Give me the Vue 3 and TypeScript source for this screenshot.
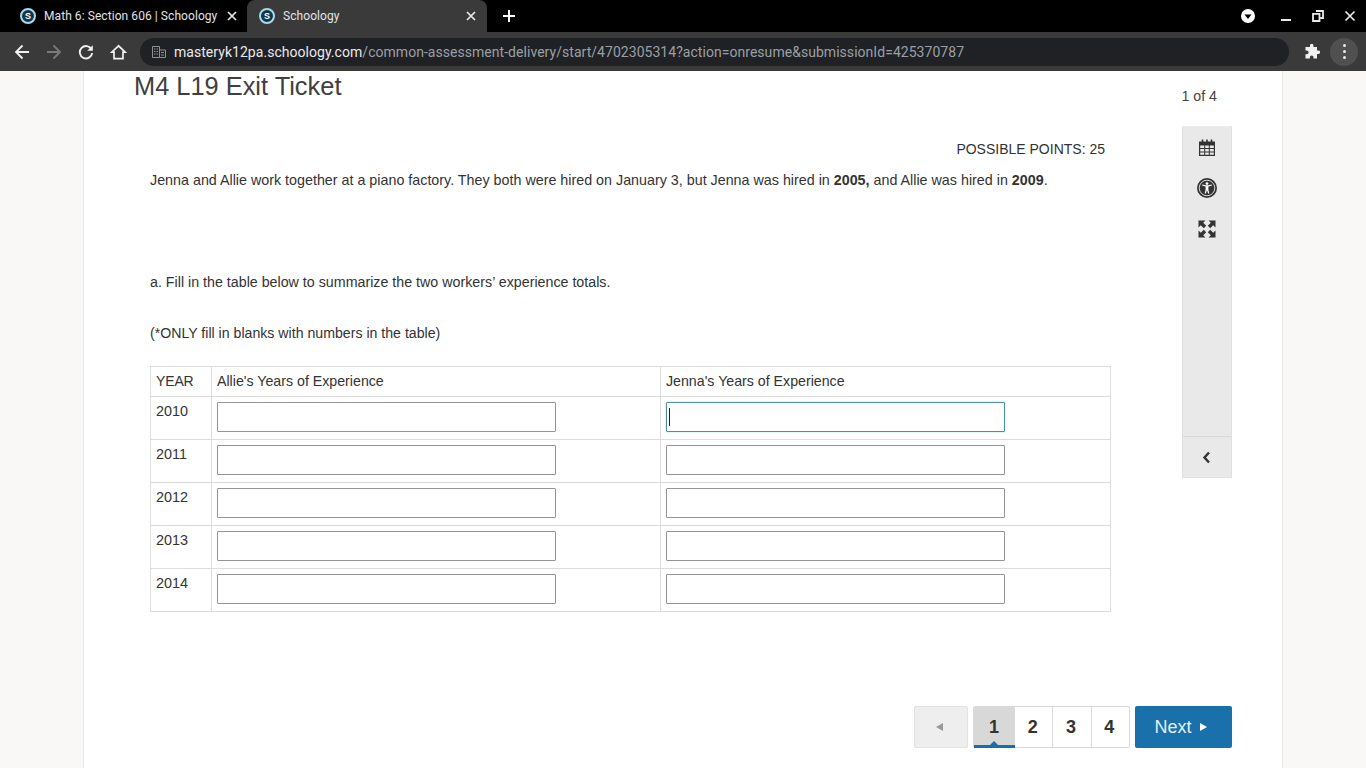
<script setup lang="ts">
const rows: number[] = [2010, 2011, 2012, 2013, 2014]
const pages: number[] = [1, 2, 3, 4]
</script>

<template>
  <div class="screen">
    <header class="chrome">
      <div class="tabstrip">
        <div class="tab">
          <span class="favicon"><span>S</span></span>
          <span class="tab-title">Math 6: Section 606 | Schoology</span>
          <svg class="tab-x" width="10" height="10" viewBox="0 0 10 10"><path d="M1 1l8 8M9 1l-8 8" stroke="#e8eaed" stroke-width="1.7" fill="none"/></svg>
        </div>
        <div class="tab active">
          <span class="favicon"><span>S</span></span>
          <span class="tab-title">Schoology</span>
          <svg class="tab-x" width="10" height="10" viewBox="0 0 10 10"><path d="M1 1l8 8M9 1l-8 8" stroke="#e8eaed" stroke-width="1.7" fill="none"/></svg>
        </div>
        <svg class="newtab" width="14" height="14" viewBox="0 0 14 14"><path d="M7 1v12M1 7h12" stroke="#fff" stroke-width="2" fill="none"/></svg>
        <div class="win">
          <svg width="16" height="16" viewBox="0 0 16 16"><circle cx="8" cy="8" r="7" fill="#fff"/><path d="M4.500 6.500h7L8 11z" fill="#000"/></svg>
          <svg class="w-min" width="12" height="12" viewBox="0 0 12 12"><path d="M1 10h10" stroke="#e8eaed" stroke-width="2"/></svg>
          <svg class="w-max" width="12" height="12" viewBox="0 0 12 12"><path d="M4 1h7v7H8.500M1 3.800h6.500v7.200H1z" stroke="#e8eaed" stroke-width="1.800" fill="none"/></svg>
          <svg class="w-close" width="12" height="12" viewBox="0 0 12 12"><path d="M1.500 1.500l9 9M10.500 1.500l-9 9" stroke="#e8eaed" stroke-width="1.700" fill="none"/></svg>
        </div>
      </div>
      <div class="toolbar">
        <svg class="nav" width="16" height="16" viewBox="0 0 16 16"><path d="M15 8H2.500M8.500 1.500L2 8l6.500 6.500" stroke="#f1f1f1" stroke-width="1.800" fill="none"/></svg>
        <svg class="nav" width="16" height="16" viewBox="0 0 16 16"><path d="M1 8h12.500M7.500 1.500L14 8l-6.500 6.500" stroke="#7a7a7a" stroke-width="1.800" fill="none"/></svg>
        <svg class="nav" width="16" height="16" viewBox="0 0 16 16"><path d="M13.600 5.500A6.200 6.200 0 1 0 14.200 9" stroke="#f1f1f1" stroke-width="1.900" fill="none"/><path d="M14.800 1.200v5.600H9.200z" fill="#f1f1f1"/></svg>
        <svg class="nav home" width="17" height="16" viewBox="0 0 17 16"><path d="M8.500 1.800L1.800 8.200h2.200v6.500h9V8.200h2.200z" stroke="#f1f1f1" stroke-width="1.700" fill="none" stroke-linejoin="miter"/></svg>
        <div class="omnibox">
          <svg width="14" height="12" viewBox="0 0 14 12"><path d="M.5 .5h7v11h-7zM7.500 4h6v7.500h-6M2 3h1.500M4.500 3H6M2 5.500h1.500M4.500 5.500H6M2 8h1.500M4.500 8H6M9 6.500h3M9 9h3" stroke="#8f9194" stroke-width="1" fill="none"/></svg>
          <span class="url"><span class="host">masteryk12pa.schoology.com</span><span class="path">/common-assessment-delivery/start/4702305314?action=onresume&amp;submissionId=425370787</span></span>
        </div>
        <svg class="puzzle" width="16" height="16" viewBox="0 0 16 16"><path d="M6 1.500a1.700 1.700 0 0 1 3.400 0V3h3.600v3.400h1.300a1.800 1.800 0 0 1 0 3.600H13v4.500H9.500v-1.300a1.800 1.800 0 0 0-3.600 0v1.300H1.500v-4.300h1.200a1.900 1.900 0 0 0 0-3.800H1.500V3H6z" fill="#f1f1f1"/></svg>
        <div class="menu"><i></i><i></i><i></i></div>
      </div>
    </header>

    <main class="page">
      <section class="sheet">
        <div class="head">
          <h1>M4 L19 Exit Ticket</h1>
          <span class="count">1 of 4</span>
        </div>
        <div class="body">
          <div class="question">
            <div class="points">POSSIBLE POINTS: 25</div>
            <p class="intro">Jenna and Allie work together at a piano factory. They both were hired on January 3, but Jenna was hired in <b>2005,</b> and Allie was hired in <b>2009</b>.</p>
            <p class="part">a. Fill in the table below to summarize the two workers’ experience totals.</p>
            <p class="note">(*ONLY fill in blanks with numbers in the table)</p>
            <table>
              <thead>
                <tr>
                  <td class="c1">YEAR</td>
                  <td class="c2">Allie's Years of Experience</td>
                  <td class="c3">Jenna's Years of Experience</td>
                </tr>
              </thead>
              <tbody>
                <tr v-for="(y, i) in rows" :key="y">
                  <td class="year">{{ y }}</td>
                  <td><div class="field"></div></td>
                  <td>
                    <div class="field" :class="{ focus: i === 0 }"><span v-if="i === 0" class="caret"></span></div>
                  </td>
                </tr>
              </tbody>
            </table>
          </div>
          <aside class="tools">
            <div class="tool-top">
              <svg width="18" height="18" viewBox="0 0 18 18"><path d="M1 2.500h16V17H1z" fill="#333"/><path d="M4.500 .5v3M9 .5v3M13.500 .5v3" stroke="#333" stroke-width="1.600"/><path d="M2.200 6.500h4v2.600h-4zM7.200 6.500h3.600v2.600H7.200zM11.800 6.500h4v2.600h-4zM2.200 10.100h4v2.400h-4zM7.200 10.100h3.600v2.400H7.200zM11.800 10.100h4v2.400h-4zM2.200 13.500h4v2.300h-4zM7.200 13.500h3.600v2.300H7.200zM11.800 13.500h4v2.300h-4z" fill="#e9e9e9"/></svg>
              <svg width="20" height="20" viewBox="0 0 20 20"><circle cx="10" cy="10" r="10" fill="#333"/><circle cx="10" cy="10" r="7.800" fill="none" stroke="#e9e9e9" stroke-width=".9"/><circle cx="10" cy="5.600" r="1.400" fill="#fff"/><path d="M5 7.400l3.600 1v3L7.700 15.500h1.200L10 12l1.100 3.500h1.200l-.9-4.100v-3l3.600-1-.2-.9-3.700.8H8.900l-3.700-.8z" fill="#fff"/></svg>
              <svg class="expand" width="18" height="18" viewBox="0 0 18 18"><path d="M.5 .5h7L5.200 2.800l3 3-2.400 2.400-3-3L.5 7.500zM17.500 .5v7l-2.300-2.300-3 3-2.400-2.400 3-3L10.500 .5zM.5 17.500v-7l2.300 2.300 3-3 2.400 2.400-3 3 2.300 2.300zM17.500 17.500h-7l2.300-2.300-3-3 2.400-2.400 3 3 2.300-2.300z" fill="#333"/></svg>
            </div>
            <div class="tool-bottom">
              <svg width="9" height="13" viewBox="0 0 9 13"><path d="M7 1.500L2.500 6.500 7 11.500" stroke="#333" stroke-width="2.400" fill="none"/></svg>
            </div>
          </aside>
        </div>
        <nav class="pager">
          <div class="prev"><span class="tri-left"></span></div>
          <div class="numbers">
            <div v-for="p in pages" :key="p" class="num" :class="{ current: p === 1 }">{{ p }}</div>
          </div>
          <div class="next">Next<span class="tri-right"></span></div>
        </nav>
      </section>
    </main>
  </div>
</template>

<style scoped>
.screen {
  width: 1366px;
  height: 768px;
  overflow: hidden;
  display: flex;
  flex-direction: column;
  font-family: "Liberation Sans", Arial, sans-serif;
  color: #333;
}
.chrome { flex: none; height: 71px; display: flex; flex-direction: column; }
.tabstrip {
  height: 32px;
  background: #000;
  display: flex;
  align-items: stretch;
  font-family: Roboto, "Noto Sans", sans-serif;
}
.tab {
  width: 247px;
  padding: 0 10px 0 20px;
  box-sizing: border-box;
  display: flex;
  align-items: center;
  color: #e1e3e6;
  font-size: 12px;
  letter-spacing: .07px;
}
.tab.active {
  width: 240px;
  background: #3a3a3a;
  border-radius: 8px 8px 0 0;
  padding: 0 11px 0 12px;
}
.favicon {
  width: 16px;
  height: 16px;
  border-radius: 50%;
  background: #12354d;
  border: 2px solid #a6dbe8;
  box-sizing: border-box;
  display: flex;
  align-items: center;
  justify-content: center;
  color: #fff;
  font: bold 9px/1 "Liberation Sans", sans-serif;
  flex: none;
}
.tab-title { margin-left: 8px; flex: 1; white-space: nowrap; }
.tab-x { flex: none; }
.newtab { align-self: center; margin-left: 15px; }
.win { margin-left: auto; display: flex; align-items: center; padding-right: 10px; }
.w-min { margin-left: 24px; }
.w-max { margin-left: 20px; }
.w-close { margin-left: 20px; }

.toolbar {
  height: 39px;
  background: #3a3a3a;
  display: flex;
  align-items: center;
  padding: 0 8px 0 14px;
}
.nav { margin-right: 16px; flex: none; }
.nav.home { margin-right: 13px; }
.omnibox {
  width: 1151px;
  height: 28px;
  background: #202124;
  border-radius: 14px;
  display: flex;
  align-items: center;
  padding-left: 12px;
  box-sizing: border-box;
}
.url { margin-left: 8px; font: 14px/1 Roboto, "Noto Sans", sans-serif; letter-spacing: .04px; white-space: nowrap; }
.host { color: #e8eaed; }
.path { color: #9aa0a6; }
.puzzle { margin-left: 15px; flex: none; }
.menu {
  width: 28px;
  height: 28px;
  margin-left: 10px;
  border-radius: 50%;
  background: #505050;
  display: flex;
  flex-direction: column;
  align-items: center;
  justify-content: center;
  gap: 3px;
}
.menu i { width: 3px; height: 3px; border-radius: 50%; background: #e8eaed; }

.page {
  flex: 1;
  min-height: 0;
  background: #f9f8f7;
  padding: 0 83px;
}
.sheet {
  height: 100%;
  box-sizing: border-box;
  background: #fff;
  border: 1px solid #e8e8e6;
  border-width: 0 1px;
  padding: 0 50px;
  display: flex;
  flex-direction: column;
}
.head { display: flex; justify-content: space-between; height: 55px; }
h1 {
  margin: 0;
  font-size: 25.400px;
  font-weight: 400;
  line-height: 30px;
  color: #404040;
}
.count { font-size: 14.200px; line-height: 16px; margin: 17px 15px 0 0; color: #444; }
.body { display: flex; justify-content: space-between; }
.question { width: 961px; margin-left: 16px; color: #333; }
.points { height: 16px; line-height: 16px; margin-top: 15px; text-align: right; padding-right: 6px; font-size: 14px; }
p { margin: 0; line-height: 16px; }
.intro { margin-top: 15px; font-size: 14.300px; }
.part { margin-top: 86px; font-size: 14.250px; }
.note { margin-top: 35px; font-size: 14.150px; }
table {
  margin-top: 25px;
  width: 961px;
  border-collapse: collapse;
  table-layout: fixed;
  font-size: 14.400px;
}
td { border: 1px solid #dcdcdc; padding: 5px; line-height: 19px; vertical-align: top; }
thead td { height: 19px; padding: 5px; font-size: 14.200px; }
thead td.c1 { width: 50px; font-size: 14px; letter-spacing: -.15px; }
.c2 { width: 438px; }
.year { font-size: 14.400px; }
tbody td { height: 32px; }
.field {
  width: 339px;
  height: 30px;
  box-sizing: border-box;
  border: 1px solid #949494;
  border-radius: 1px;
  background: #fff;
  display: flex;
  align-items: center;
  padding-left: 2px;
}
.field.focus { border-color: #4a8fa3; box-shadow: 0 0 0 1px #e5f5f8; }
.caret { width: 1px; height: 18px; background: #222; }

.tools {
  width: 50px;
  height: 352px;
  box-sizing: border-box;
  background: #e9e9e9;
  border: 1px solid #e0e0e0;
  border-top-color: #eeeeee;
  display: flex;
  flex-direction: column;
}
.tool-top {
  height: 310px;
  display: flex;
  flex-direction: column;
  align-items: center;
  padding-top: 12px;
  gap: 21px;
  box-sizing: border-box;
  border-bottom: 1px solid #d8d8d8;
}
.expand { margin-top: 1px; }
.tool-bottom { flex: 1; display: flex; align-items: center; justify-content: center; padding-right: 1px; }

.pager {
  margin-top: auto;
  margin-bottom: 20px;
  display: flex;
  justify-content: flex-end;
  gap: 5px;
  height: 42px;
}
.prev {
  width: 54px;
  background: #eee;
  border: 1px solid #e2e2e2;
  border-radius: 2px;
  box-sizing: border-box;
  display: flex;
  align-items: center;
  justify-content: center;
  padding-right: 4px;
}
.tri-left { border: 4.500px solid transparent; border-right: 7px solid #999; border-left: 0; }
.numbers {
  display: flex;
  width: 157px;
  box-sizing: border-box;
  border: 1px solid #d9d9d9;
  border-radius: 2px;
  background: #fff;
}
.num {
  flex: 1;
  display: flex;
  align-items: center;
  justify-content: center;
  font-weight: 700;
  font-size: 18px;
  color: #333;
  border-left: 1px solid #d9d9d9;
  padding-right: 2px;
}
.num:first-child { border-left: 0; flex: none; width: 40px; background: #d8d8d8; position: relative; padding-right: 0; }
.current::after {
  content: "";
  position: absolute;
  left: 0;
  right: -1px;
  bottom: -1px;
  height: 3px;
  background: #1a6fa8;
}
.current::before {
  content: "";
  position: absolute;
  left: 50%;
  margin-left: -4px;
  bottom: 2px;
  border: 4px solid transparent;
  border-bottom-color: #1a6fa8;
  border-top: 0;
}
.next {
  width: 97px;
  background: #1a70ab;
  border-radius: 2px;
  color: #e3eef6;
  font-size: 18px;
  display: flex;
  align-items: center;
  justify-content: center;
  gap: 8px;
  padding-right: 6px;
  box-sizing: border-box;
}
.tri-right { border: 4px solid transparent; border-left: 7px solid #fff; border-right: 0; }
</style>

<style>
html, body { margin: 0; background: #f9f8f7; }
</style>
